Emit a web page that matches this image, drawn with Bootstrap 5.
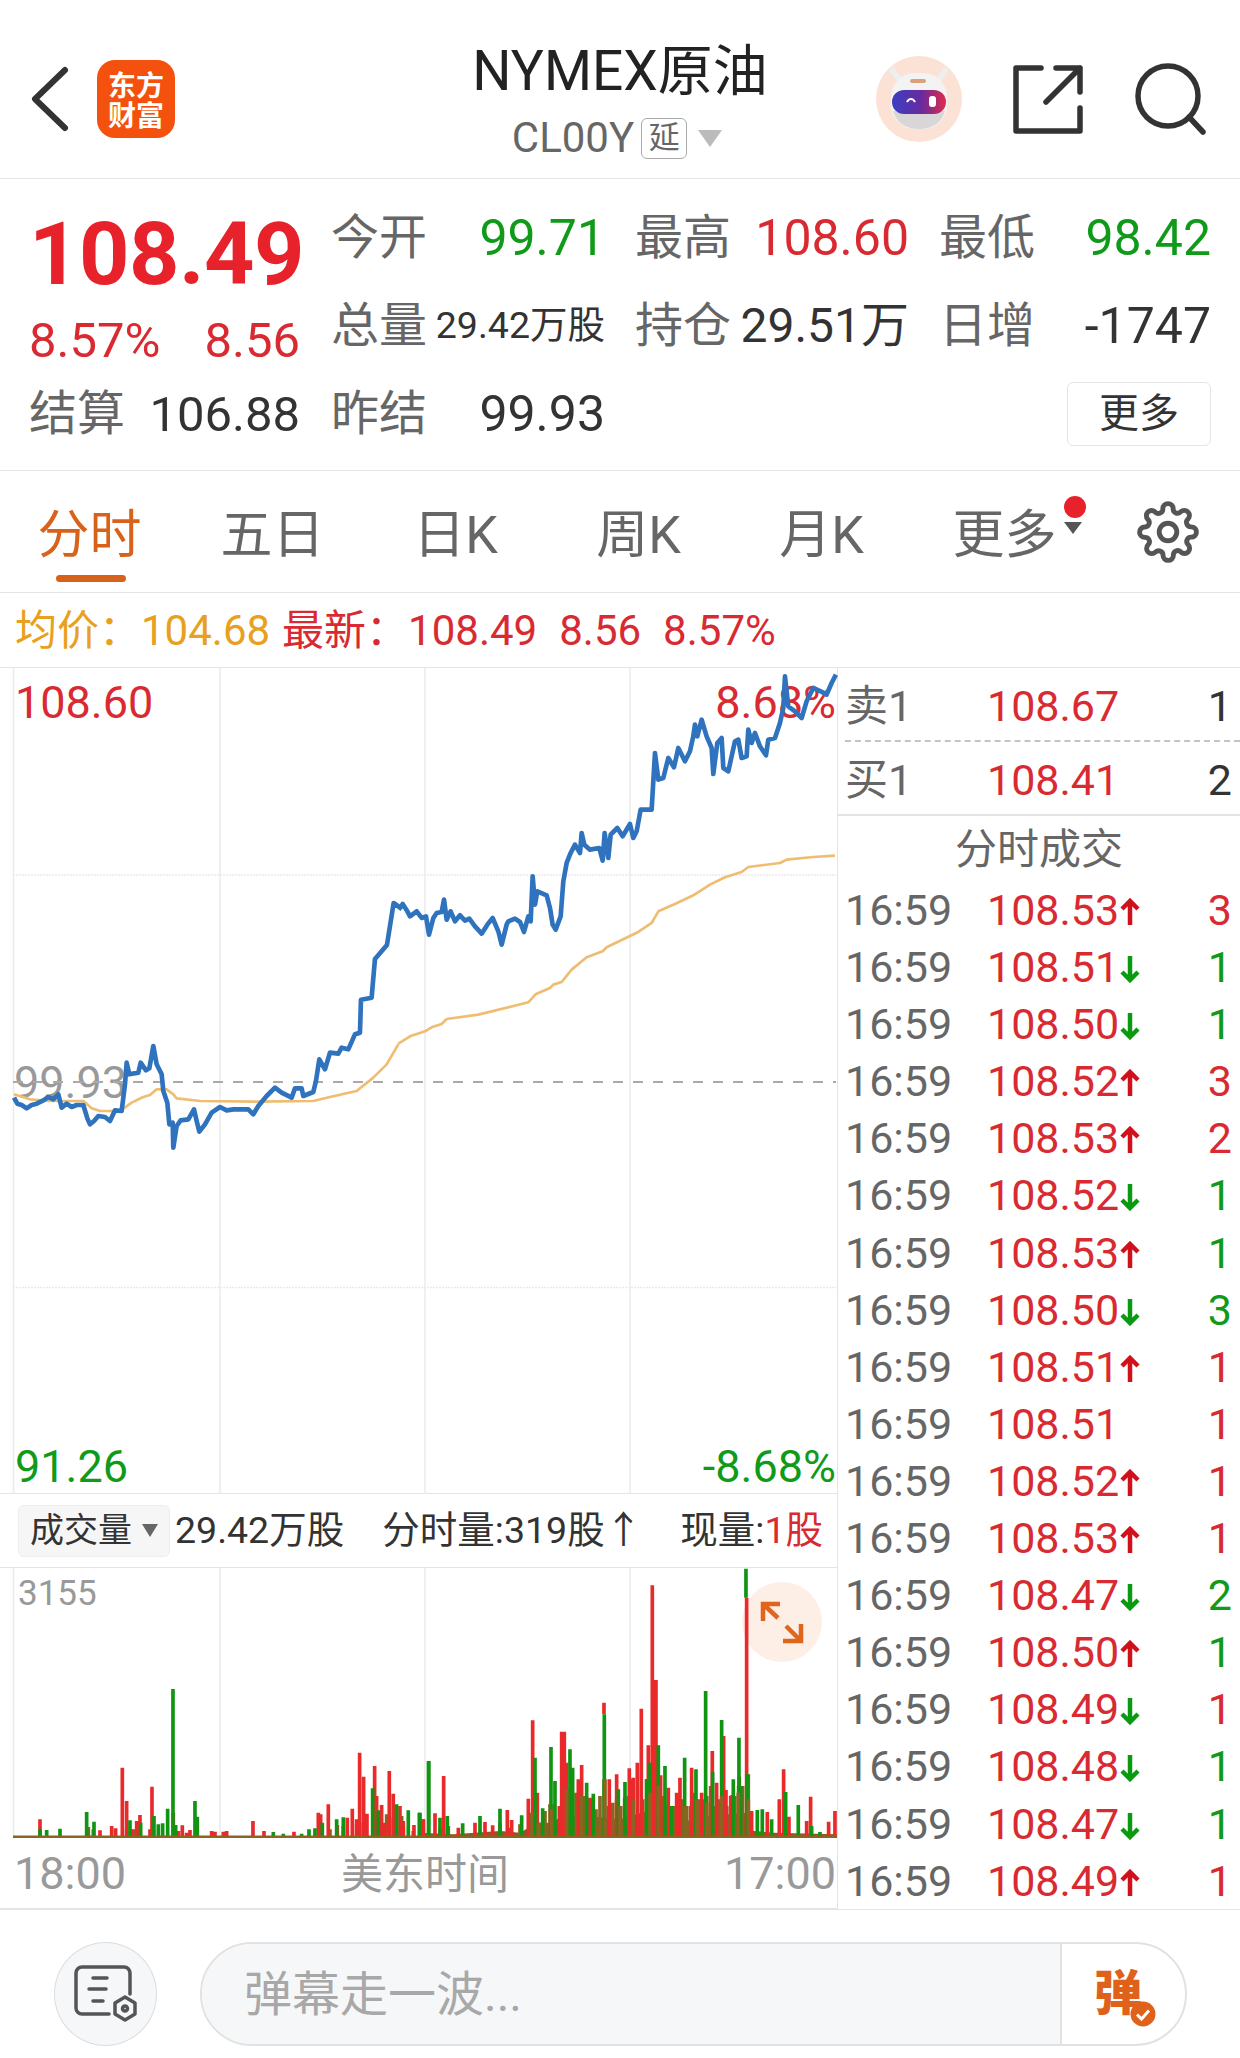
<!DOCTYPE html>
<html lang="zh-CN">
<head>
    <meta charset="UTF-8">
    <meta name="viewport" content="width=device-width, initial-scale=1.0">
    <title>NYMEX原油</title>
    <link rel="stylesheet" href="https://cdn.jsdelivr.net/npm/bootstrap@5.3.0/dist/css/bootstrap.min.css">
    <style>
        :root { --bs-border-color: #e4e4e4; }
        body {
            width: 1240px;
            height: 2058px;
            overflow: hidden;
            background: #fff;
            color: #333;
            font-family: Roboto, "Noto Sans CJK SC", sans-serif;
        }
        .up { color: #d92a32; }
        .down { color: #109a1a; }
        .ink { color: #333; }
        .soft { color: #666; }
        .mute { color: #999; }

        /* header */
        .top-bar {
            height: 179px;
            display: grid;
            grid-template-columns: 1fr auto 1fr;
        }
        .back-logo { padding: 20px 0 0 30px; gap: 27px; }
        .app-logo {
            width: 78px;
            height: 78px;
            border-radius: 18px;
            background: #f4510e;
            color: #fff;
            font-size: 28px;
            font-weight: 700;
            line-height: 30px;
            text-align: center;
            padding-top: 9px;
            font-family: "Noto Sans CJK SC", sans-serif;
        }
        .title-wrap { padding-top: 41px; text-align: center; }
        .main-title { font-size: 55px; line-height: 60px; color: #222; }
        .sub-title { font-size: 42px; line-height: 44px; margin: 15px 6px 0 0; color: #666; gap: 7px; }
        .delay-tag {
            width: 46px;
            height: 41px;
            border: 1px solid #aaa;
            border-radius: 6px;
            font-size: 31px;
            line-height: 38px;
            text-align: center;
        }
        .tri-down {
            width: 0;
            height: 0;
            border-left: 12px solid transparent;
            border-right: 12px solid transparent;
            border-top: 17px solid #bbb;
            margin-left: 4px;
        }
        .top-actions { padding: 20px 33px 0 0; gap: 50px; }

        /* quote block */
        .quote-grid {
            height: 292px;
            padding: 15px 0 0 29px;
            display: grid;
            grid-template-columns: 302px 304px 304px 272px;
            grid-auto-rows: 88px;
            font-size: 50px;
            line-height: 1;
        }
        .quote-cell { display: flex; align-items: center; justify-content: space-between; padding-right: 30px; }
        .quote-cell.last { padding-right: 0; }
        .quote-cell.first { padding-right: 31px; font-size: 49px; }
        .quote-cell.lower { padding-top: 28px; }
        .quote-cell.lowest { padding-top: 32px; }
        .quote-cell .soft { font-size: 48px; }
        .big-price { font-size: 88px; font-weight: 700; color: #e8222b; letter-spacing: -.5px; }
        .tiny-val { font-size: 37.5px; color: #333; }
        .mid-val { font-size: 48px; }
        .more-btn {
            width: 144px;
            height: 64px;
            margin-left: auto;
            padding: 0;
            font-size: 40px;
            line-height: 60px;
            color: #333;
            background: #fff;
            border: 1px solid #e4e4e4;
            border-radius: 6px;
        }

        /* tabs */
        .tab-bar { height: 122px; padding-left: 0; }
        .tab-item {
            width: 183px;
            height: 100%;
            padding-top: 35px;
            text-align: center;
            font-size: 52px;
            line-height: 60px;
            color: #666;
            position: relative;
            left: -2px;
        }
        .tab-item.on { color: #d9621a; }
        .tab-item.on::after {
            content: "";
            position: absolute;
            left: 58px;
            bottom: 10px;
            width: 70px;
            height: 7px;
            border-radius: 4px;
            background: #d9621a;
        }
        .red-dot {
            position: absolute;
            left: 151px;
            top: 25px;
            width: 22px;
            height: 22px;
            border-radius: 50%;
            background: #e8222b;
        }
        .tab-tri {
            position: absolute;
            left: 151px;
            top: 51px;
            border-left: 9px solid transparent;
            border-right: 9px solid transparent;
            border-top: 12px solid #555;
        }
        .gear-box { padding-left: 39px; }

        /* latest price line */
        .price-line { height: 75px; padding-left: 15px; font-size: 42px; line-height: 75px; white-space: nowrap; }
        .price-line span { margin-right: 22px; }
        .price-line .gold { margin-right: 12px; }
        .gold { color: #e8a020; }

        /* main area */
        .board { height: 1241px; }
        .left-col { width: 838px; }
        .plot { height: 826px; }
        .plot svg, .vol-plot svg { position: absolute; left: 0; top: 0; }
        .plot-label { position: absolute; font-size: 45px; line-height: 1; }
        .tool-row { height: 74px; padding-left: 18px; padding-right: 14px; font-size: 37.5px; }
        .vol-pick {
            width: 152px;
            height: 52px;
            margin-right: 5px;
            padding-left: 11px;
            gap: 10px;
            font-size: 34px;
            color: #333;
            background: #f6f6f6;
            border: 1px solid #eee;
            border-radius: 6px;
        }
        .tri-small {
            border-left: 8px solid transparent;
            border-right: 8px solid transparent;
            border-top: 13px solid #666;
        }
        .vol-plot { height: 270px; }
        .vol-max { position: absolute; left: 18px; top: 5px; font-size: 35px; line-height: 1.2; }
        .axis-row { height: 71px; padding: 2px 1px 0 14px; font-size: 45px; }
        .axis-mid { font-size: 42px; }

        /* right panel */
        .right-col { width: 402px; padding-left: 7px; overflow: hidden; font-size: 43px; line-height: 57px; }
        .deal-row { height: 57.1px; padding-right: 8px; white-space: nowrap; }
        .deal-time { width: 142px; color: #666; }
        .deal-row svg { margin-left: 1px; vertical-align: -1px; }
        .deal-qty { margin-left: auto; }
        .level-row { height: 74px; line-height: 76px; padding-right: 8px; }
        .level-row.buy { height: 72px; }
        .level-row.sell { border-bottom: 2px dashed #c4c4c4; }
        .level-head { margin-left: -7px; border-top: 2px solid #e4e4e4; height: 68px; line-height: 68px; text-align: center; font-size: 42px; color: #666; }

        /* bottom bar */
        .foot-bar { height: 150px; padding: 32px 53px 0 54px; gap: 43px; }
        .round-tool {
            width: 103px;
            height: 104px;
            border: 1px solid #ddd;
            border-radius: 50%;
            background: #f6f7f9;
        }
        .chat-box {
            width: 987px;
            height: 104px;
            border: 2px solid #e2e2e2;
            border-radius: 52px;
            overflow: hidden;
        }
        .chat-input {
            width: 860px;
            padding-left: 42px;
            font-size: 48px;
            line-height: 102px;
            color: #a8a8a8;
            background: #f6f7f9;
            border-right: 2px solid #e2e2e2;
        }
        .chat-send { padding-left: 32px; position: relative; }
        .send-char { font-size: 48px; font-weight: 900; color: #e0621a; line-height: 100px; }
        .send-ok { position: absolute; left: 68px; top: 57px; }
    </style>
</head>
<body>
    <svg width="0" height="0" class="position-absolute">
        <symbol id="tick-up" viewBox="0 0 20 28"><path d="M10 27V3M2 11l8-8 8 8" fill="none" stroke="#d0101a" stroke-width="4.5"/></symbol>
        <symbol id="tick-down" viewBox="0 0 20 28"><path d="M10 1v24M2 17l8 8 8-8" fill="none" stroke="#0a9a12" stroke-width="4.5"/></symbol>
    </svg>

    <header class="top-bar border-bottom">
        <div class="back-logo d-flex align-items-center">
            <svg width="40" height="70" viewBox="0 0 40 70"><path d="M35 6 5 35l30 29" fill="none" stroke="#333" stroke-width="6" stroke-linecap="round" stroke-linejoin="round"/></svg>
            <div class="app-logo">东方<br>财富</div>
        </div>
        <div class="title-wrap">
            <div class="main-title">NYMEX原油</div>
            <div class="sub-title d-flex align-items-center justify-content-center">
                <span>CL00Y</span>
                <span class="delay-tag">延</span>
                <span class="tri-down"></span>
            </div>
        </div>
        <div class="top-actions d-flex align-items-center justify-content-end">
            <svg width="88" height="88" viewBox="0 0 88 88">
                <defs>
                    <linearGradient id="visor" x1="0" x2="1" y1="0" y2="0">
                        <stop offset="0" stop-color="#3a3fc4"/>
                        <stop offset=".55" stop-color="#6a2a9e"/>
                        <stop offset="1" stop-color="#e02a4a"/>
                    </linearGradient>
                </defs>
                <circle cx="44" cy="44" r="43" fill="#fbe2d5"/>
                <path d="M18 16l6 8M70 16l-6 8" stroke="#eee" stroke-width="6" stroke-linecap="round"/>
                <rect x="16" y="18" width="56" height="56" rx="24" fill="#f4f3f3"/>
                <path d="M18 56c4 14 16 18 26 18s22-4 26-18z" fill="#d8d6d6"/>
                <rect x="35" y="24" width="16" height="4" rx="2" fill="#d9a27c"/>
                <rect x="17" y="35" width="54" height="24" rx="12" fill="url(#visor)"/>
                <path d="M32 47c2-4 6-4 8 0" fill="none" stroke="#fff" stroke-width="2"/>
                <rect x="54" y="41" width="7" height="11" rx="3" fill="#fff"/>
            </svg>
            <svg width="70" height="72" viewBox="0 0 70 72"><path d="M28 5H3v63h64V45M43 5h24v24M33 39 67 5" fill="none" stroke="#333" stroke-width="5.5" stroke-linecap="round" stroke-linejoin="round"/></svg>
            <svg width="74" height="74" viewBox="0 0 74 74"><circle cx="35" cy="34" r="30" fill="none" stroke="#333" stroke-width="5.5"/><path d="M56 55l14 15" stroke="#333" stroke-width="5.5" stroke-linecap="round"/></svg>
        </div>
    </header>

    <section class="quote-grid border-bottom">
        <div class="quote-cell first lowest"><span class="big-price">108.49</span></div>
        <div class="quote-cell"><span class="soft">今开</span><span class="down">99.71</span></div>
        <div class="quote-cell"><span class="soft">最高</span><span class="up">108.60</span></div>
        <div class="quote-cell last"><span class="soft">最低</span><span class="down">98.42</span></div>

        <div class="quote-cell first lower"><span class="up">8.57%</span><span class="up">8.56</span></div>
        <div class="quote-cell"><span class="soft">总量</span><span class="tiny-val">29.42万股</span></div>
        <div class="quote-cell"><span class="soft">持仓</span><span class="ink mid-val">29.51万</span></div>
        <div class="quote-cell last"><span class="soft">日增</span><span class="ink">-1747</span></div>

        <div class="quote-cell first"><span class="soft">结算</span><span class="ink">106.88</span></div>
        <div class="quote-cell"><span class="soft">昨结</span><span class="ink">99.93</span></div>
        <div class="quote-cell"></div>
        <div class="quote-cell last"><button type="button" class="btn more-btn">更多</button></div>
    </section>

    <nav class="tab-bar d-flex border-bottom">
        <div class="tab-item on">分时</div>
        <div class="tab-item">五日</div>
        <div class="tab-item">日K</div>
        <div class="tab-item">周K</div>
        <div class="tab-item">月K</div>
        <div class="tab-item">更多<span class="red-dot"></span><span class="tab-tri"></span></div>
        <div class="gear-box d-flex align-items-center">
            <svg width="62" height="62" viewBox="0 0 24 24" fill="none" stroke="#555" stroke-width="1.9" stroke-linejoin="round"><circle cx="12" cy="12" r="3.4"/><path d="M19.4 15a1.65 1.65 0 0 0 .33 1.82l.06.06a2 2 0 0 1 0 2.83 2 2 0 0 1-2.83 0l-.06-.06a1.65 1.65 0 0 0-1.82-.33 1.65 1.65 0 0 0-1 1.51V21a2 2 0 0 1-2 2 2 2 0 0 1-2-2v-.09A1.65 1.65 0 0 0 9 19.4a1.65 1.65 0 0 0-1.82.33l-.06.06a2 2 0 0 1-2.83 0 2 2 0 0 1 0-2.83l.06-.06a1.65 1.65 0 0 0 .33-1.82 1.65 1.65 0 0 0-1.51-1H3a2 2 0 0 1-2-2 2 2 0 0 1 2-2h.09A1.65 1.65 0 0 0 4.6 9a1.65 1.65 0 0 0-.33-1.82l-.06-.06a2 2 0 0 1 0-2.83 2 2 0 0 1 2.83 0l.06.06a1.65 1.65 0 0 0 1.82.33H9a1.65 1.65 0 0 0 1-1.51V3a2 2 0 0 1 2-2 2 2 0 0 1 2 2v.09a1.65 1.65 0 0 0 1 1.51 1.65 1.65 0 0 0 1.82-.33l.06-.06a2 2 0 0 1 2.83 0 2 2 0 0 1 0 2.83l-.06.06a1.65 1.65 0 0 0-.33 1.82V9a1.65 1.65 0 0 0 1.51 1H21a2 2 0 0 1 2 2 2 2 0 0 1-2 2h-.09a1.65 1.65 0 0 0-1.51 1z"/></svg>
        </div>
    </nav>

    <div class="price-line border-bottom">
        <span class="gold">均价：104.68</span><span class="up">最新：108.49</span><span class="up">8.56</span><span class="up">8.57%</span>
    </div>

    <main class="board d-flex">
        <div class="left-col border-end">
            <!-- price chart -->
            <div class="plot position-relative border-bottom">
                <span class="plot-label up" style="left:15px;top:12px">108.60</span>
                <span class="plot-label up" style="right:1px;top:12px">8.68%</span>
                <span class="plot-label mute" style="left:14px;top:392px">99.93</span>
                <span class="plot-label down" style="left:15px;top:776px">91.26</span>
                <span class="plot-label down" style="right:1px;top:776px">-8.68%</span>
                <svg width="838" height="826" viewBox="0 667 838 826" fill="none">
                    <path d="M13.5 667V1493M220 667V1493M425 667V1493M630 667V1493" stroke="#ebebeb" stroke-width="1.5"/>
                    <path d="M13 874H836M13 1286.5H836" stroke="#eaeaea" stroke-width="1.5" stroke-dasharray="2 1"/>
                    <path d="M13 1081H836" stroke="#aaa" stroke-width="2" stroke-dasharray="10 10"/>
                    <g stroke="#efbd72" stroke-width="8" stroke-linejoin="round">
                        <polyline transform="translate(10 1030) scale(.3333)" points="12,190 60,205 120,210 220,210 245,232 270,240 330,240 365,215 400,198 420,192 440,175 470,175 490,190 500,202 570,210 740,212 910,210 960,198 1040,180 1090,140 1130,100 1165,40"/>
                        <polyline transform="translate(400 667) scale(.3333)" points="-6,1128 30,1105 75,1090 95,1078 125,1068 140,1053 235,1040 385,1003 408,978 450,960 460,950 485,942 515,905 560,868 608,850 620,838 715,792 755,765 775,730 825,708 880,682 930,650 975,628 1025,612 1045,597 1140,585 1160,575 1240,567 1305,563"/>
                    </g>
                    <g stroke="#2f72bd" stroke-width="14" stroke-linejoin="round">
                        <polyline transform="translate(10 1030) scale(.3333)" points="12,200 22,218 35,222 50,232 65,222 80,218 100,208 115,198 130,205 145,190 155,230 170,218 185,228 200,222 220,222 232,262 240,280 252,270 265,255 285,258 300,270 315,238 335,240 345,160 350,95 358,130 385,125 392,95 408,118 418,112 430,45 440,100 455,130 460,180 472,215 478,280 488,275 490,350 500,285 512,268 535,265 552,235 560,270 568,302 585,280 605,245 630,228 650,238 670,235 715,235 730,250 745,225 770,195 795,170 815,185 845,200 855,172 875,172 880,195 910,183 918,150 928,85 945,115 960,65 985,68 995,50 1015,55 1035,10 1050,5 1053,-94 1085,-100 1095,-216 1131,-258 1151,-384 1176,-366"/>
                        <polyline transform="translate(400 667) scale(.3333)" points="0,720 8,708 22,730 30,745 50,730 65,750 78,745 87,800 100,750 110,735 125,732 132,695 140,755 152,730 165,760 180,742 195,758 208,752 225,775 245,797 262,770 278,750 295,790 305,830 320,770 325,760 345,752 360,762 372,792 385,745 392,760 398,625 405,710 412,670 440,682 450,720 458,770 467,785 482,745 490,640 500,585 512,555 525,530 540,555 545,495 553,530 570,545 598,540 608,578 614,495 625,570 632,500 652,480 668,505 690,468 700,510 710,490 722,425 755,425 765,255 775,335 790,330 805,270 822,298 835,240 855,280 870,250 880,205 885,170 892,205 905,155 920,205 935,240 940,318 952,225 965,210 970,300 985,310 1005,220 1015,215 1025,270 1040,265 1045,185 1055,225 1065,195 1080,235 1098,262 1105,215 1125,210 1140,165 1150,120 1155,25 1165,115 1185,130 1205,150 1220,100 1240,60 1262,70 1280,80 1295,45 1308,20"/>
                    </g>
                </svg>
            </div>

            <div class="tool-row d-flex align-items-center border-bottom">
                <div class="vol-pick d-flex align-items-center"><span>成交量</span><span class="tri-small"></span></div>
                <span>29.42万股</span>
                <span class="ms-auto">分时量:319股↑</span>
                <span class="ms-auto">现量:<span class="up">1股</span></span>
            </div>

            <!-- volume bars -->
            <div class="vol-plot position-relative">
                <span class="vol-max mute">3155</span>
                <svg width="838" height="270" viewBox="0 1567 838 270" fill="none">
                    <path d="M13.5 1567V1837M220 1567V1837M425 1567V1837M630 1567V1837" stroke="#ebebeb" stroke-width="1.5"/>
                    <circle cx="782" cy="1621" r="40" fill="#fdeee6"/>
                    <path d="M780 1603h-17v17M763 1603l15 14M801 1623v17h-18M801 1640l-15-15" stroke="#e0661e" stroke-width="4.5"/>
                    <g transform="translate(10 1700) scale(.3333)" stroke-width="11">
                        <path stroke="#8a6420" d="M235 410V378M250 410V385M350 410V380M372 410V385M430 410V390M960 410V385M1000 410V375M1040 410V370M1060 410V365M1090 410V340M1120 410V375M1150 410V350M1180 410V375M1210 410V390M1240 410V385M1130 410V340M1175 410V345"/>
                        <path stroke="#e82a2a" d="M90 410V355M337 410V200M350 410V300M390 410V342M380 410V360M305 410V375M317 410V382M270 410V388M426 410V257M490 410V335M517 410V373M540 410V387M605 410V390M615 410V392M640 410V392M650 410V390M729 410V360M762 410V390M852 410V392M925 410V335M932 410V340M955 410V310M982 410V372M1027 410V323M1012 410V350M1049 410V155M1061 410V227M1071 410V338M1094 410V195M1100 410V285M1115 410V312M1138 410V210M1150 410V278M1170 410V315M1212 410V372M1240 410V355M530 410V395M505 410V390M420 410V385M365 410V385M1040 410V355M1125 410V365M1180 410V360"/>
                        <path stroke="#109412" d="M90 410V383M110 410V387M150 410V383M230 410V333M252 410V362M360 410V358M392 410V365M432 410V345M445 410V370M458 410V367M473 410V323M489 410V-36M497 410V372M555 410V300M562 410V347M790 410V393M820 410V398M875 410V398M897 410V385M915 410V382M937 410V365M980 410V355M1000 410V349M1088 410V262M1105 410V328M1160 410V310M1195 410V328M1228 410V335M1256 410V180"/>
                    </g>
                    <g transform="translate(420 1565) scale(.3333)">
                        <path fill="#8c5a20" d="M0 815V800L100 805 240 795 300 800 325 785 345 770 390 770 430 750 500 750 600 760 700 730 800 765 860 750 990 740 1000 795 1060 800 1250 805V815z"/>
                        <g stroke-width="11">
                            <path stroke="#8a6420" d="M348 815V760M362 815V770M375 815V735M390 815V715M402 815V715M432 815V690M444 815V670M456 815V670M468 815V680M480 815V680M492 815V690M504 815V700M516 815V700M528 815V730M540 815V690M552 815V640M565 815V720M578 815V710M590 815V700M602 815V720M614 815V695M626 815V690M638 815V640M668 815V700M680 815V640M690 815V640M702 815V610M714 815V628M726 815V690M738 815V720M750 815V720M762 815V720M775 815V715M788 815V700M800 815V720M812 815V720M824 815V680M836 815V700M848 815V700M860 815V690M872 815V660M884 815V720M896 815V700M908 815V700M920 815V720M932 815V690M944 815V690M956 815V660M968 815V660M985 815V625M992 815V735M240 815V770M270 815V785M300 815V775M60 815V785M85 815V780"/>
                            <path stroke="#e82a2a" d="M10 815V760M45 815V742M71 815V630M115 815V785M165 815V770M195 815V768M218 815V778M262 815V732M275 815V762M325 815V698M338 815V463M352 815V680M425 815V497M433 815V497M440 815V590M475 815V640M485 815V597M510 815V695M552 445V410M568 815V640M590 815V625M628 815V607M640 815V635M652 815V590M664 815V428M685 815V538M697 815V58M708 815V342M722 815V628M745 815V665M770 815V680M780 815V635M815 815V605M845 815V680M877 815V555M890 815V650M911 815V510M918 815V672M935 815V688M958 815V632M980 815V95M995 815V735M1042 815V738M1078 815V700M1091 815V610M1107 815V752M1160 815V765M1172 815V692M1226 815V767M1245 815V735M418 815V720"/>
                            <path stroke="#109412" d="M0 815V740M26 815V585M60 815V755M82 815V750M128 815V772M180 815V750M240 815V728M305 815V748M345 815V575M368 815V727M393 815V543M405 815V645M450 815V550M458 815V605M500 815V650M520 815V683M553 815V445M595 815V670M615 815V648M680 815V640M690 815V590M715 815V538M735 815V600M755 815V720M794 815V575M828 815V610M857 815V375M878 815V618M905 815V462M940 815V640M957 815V515M962 815V660M978 95V8M982 815V625M1012 815V732M1027 815V730M1055 815V760M1097 815V678M1135 815V717M1175 815V780M1200 815V798"/>
                            <path stroke="#8a6420" d="M335 815V740M355 815V770M395 815V730M440 815V670M485 815V690M555 815V640M600 815V720M640 815V700M690 815V680M715 815V660M795 815V720M830 815V700M860 815V710M905 815V690M955 815V680M985 815V700"/>
                        </g>
                    </g>
                    <path d="M13 1836H837" stroke="#8a6420" stroke-width="3"/>
                </svg>
            </div>

            <div class="axis-row d-flex align-items-center justify-content-between border-bottom mute">
                <span>18:00</span>
                <span class="axis-mid">美东时间</span>
                <span>17:00</span>
            </div>
        </div>

        <!-- order book and deal list -->
        <aside class="right-col">
            <div class="level-row sell d-flex"><span class="deal-time">卖1</span><span class="up">108.67</span><span class="deal-qty ink">1</span></div>
            <div class="level-row buy d-flex"><span class="deal-time">买1</span><span class="up">108.41</span><span class="deal-qty ink">2</span></div>
            <div class="level-head">分时成交</div>

            <div class="deal-row d-flex"><span class="deal-time">16:59</span><span class="up">108.53<svg width="20" height="28"><use href="#tick-up"/></svg></span><span class="deal-qty up">3</span></div>
            <div class="deal-row d-flex"><span class="deal-time">16:59</span><span class="up">108.51<svg width="20" height="28"><use href="#tick-down"/></svg></span><span class="deal-qty down">1</span></div>
            <div class="deal-row d-flex"><span class="deal-time">16:59</span><span class="up">108.50<svg width="20" height="28"><use href="#tick-down"/></svg></span><span class="deal-qty down">1</span></div>
            <div class="deal-row d-flex"><span class="deal-time">16:59</span><span class="up">108.52<svg width="20" height="28"><use href="#tick-up"/></svg></span><span class="deal-qty up">3</span></div>
            <div class="deal-row d-flex"><span class="deal-time">16:59</span><span class="up">108.53<svg width="20" height="28"><use href="#tick-up"/></svg></span><span class="deal-qty up">2</span></div>
            <div class="deal-row d-flex"><span class="deal-time">16:59</span><span class="up">108.52<svg width="20" height="28"><use href="#tick-down"/></svg></span><span class="deal-qty down">1</span></div>
            <div class="deal-row d-flex"><span class="deal-time">16:59</span><span class="up">108.53<svg width="20" height="28"><use href="#tick-up"/></svg></span><span class="deal-qty down">1</span></div>
            <div class="deal-row d-flex"><span class="deal-time">16:59</span><span class="up">108.50<svg width="20" height="28"><use href="#tick-down"/></svg></span><span class="deal-qty down">3</span></div>
            <div class="deal-row d-flex"><span class="deal-time">16:59</span><span class="up">108.51<svg width="20" height="28"><use href="#tick-up"/></svg></span><span class="deal-qty up">1</span></div>
            <div class="deal-row d-flex"><span class="deal-time">16:59</span><span class="up">108.51</span><span class="deal-qty up">1</span></div>
            <div class="deal-row d-flex"><span class="deal-time">16:59</span><span class="up">108.52<svg width="20" height="28"><use href="#tick-up"/></svg></span><span class="deal-qty up">1</span></div>
            <div class="deal-row d-flex"><span class="deal-time">16:59</span><span class="up">108.53<svg width="20" height="28"><use href="#tick-up"/></svg></span><span class="deal-qty up">1</span></div>
            <div class="deal-row d-flex"><span class="deal-time">16:59</span><span class="up">108.47<svg width="20" height="28"><use href="#tick-down"/></svg></span><span class="deal-qty down">2</span></div>
            <div class="deal-row d-flex"><span class="deal-time">16:59</span><span class="up">108.50<svg width="20" height="28"><use href="#tick-up"/></svg></span><span class="deal-qty down">1</span></div>
            <div class="deal-row d-flex"><span class="deal-time">16:59</span><span class="up">108.49<svg width="20" height="28"><use href="#tick-down"/></svg></span><span class="deal-qty up">1</span></div>
            <div class="deal-row d-flex"><span class="deal-time">16:59</span><span class="up">108.48<svg width="20" height="28"><use href="#tick-down"/></svg></span><span class="deal-qty down">1</span></div>
            <div class="deal-row d-flex"><span class="deal-time">16:59</span><span class="up">108.47<svg width="20" height="28"><use href="#tick-down"/></svg></span><span class="deal-qty down">1</span></div>
            <div class="deal-row d-flex"><span class="deal-time">16:59</span><span class="up">108.49<svg width="20" height="28"><use href="#tick-up"/></svg></span><span class="deal-qty up">1</span></div>
        </aside>
    </main>

    <footer class="foot-bar d-flex border-top">
        <div class="round-tool d-flex align-items-center justify-content-center">
            <svg width="66" height="60" viewBox="0 0 66 60" fill="none" stroke="#555" stroke-width="3.5" stroke-linecap="round" stroke-linejoin="round">
                <path d="M36 50H9a6 6 0 0 1-6-6V9a6 6 0 0 1 6-6h42a6 6 0 0 1 6 6v21"/>
                <path d="M20 14h14M16 25h17M20 37h10"/>
                <path d="M52 33l10 6v11l-10 6-10-6V39z"/>
                <circle cx="52" cy="44.500" r="2.500"/>
            </svg>
        </div>
        <div class="chat-box d-flex">
            <div class="chat-input">弹幕走一波...</div>
            <div class="chat-send">
                <span class="send-char">弹</span>
                <svg class="send-ok" width="26" height="26" viewBox="0 0 26 26"><circle cx="13" cy="13" r="12.500" fill="#e0621a"/><path d="M7 13.500l4.500 4.500L19 9.500" fill="none" stroke="#fff" stroke-width="3"/></svg>
            </div>
        </div>
    </footer>

    <script src="https://cdn.jsdelivr.net/npm/bootstrap@5.3.0/dist/js/bootstrap.bundle.min.js"></script>
</body>
</html>
